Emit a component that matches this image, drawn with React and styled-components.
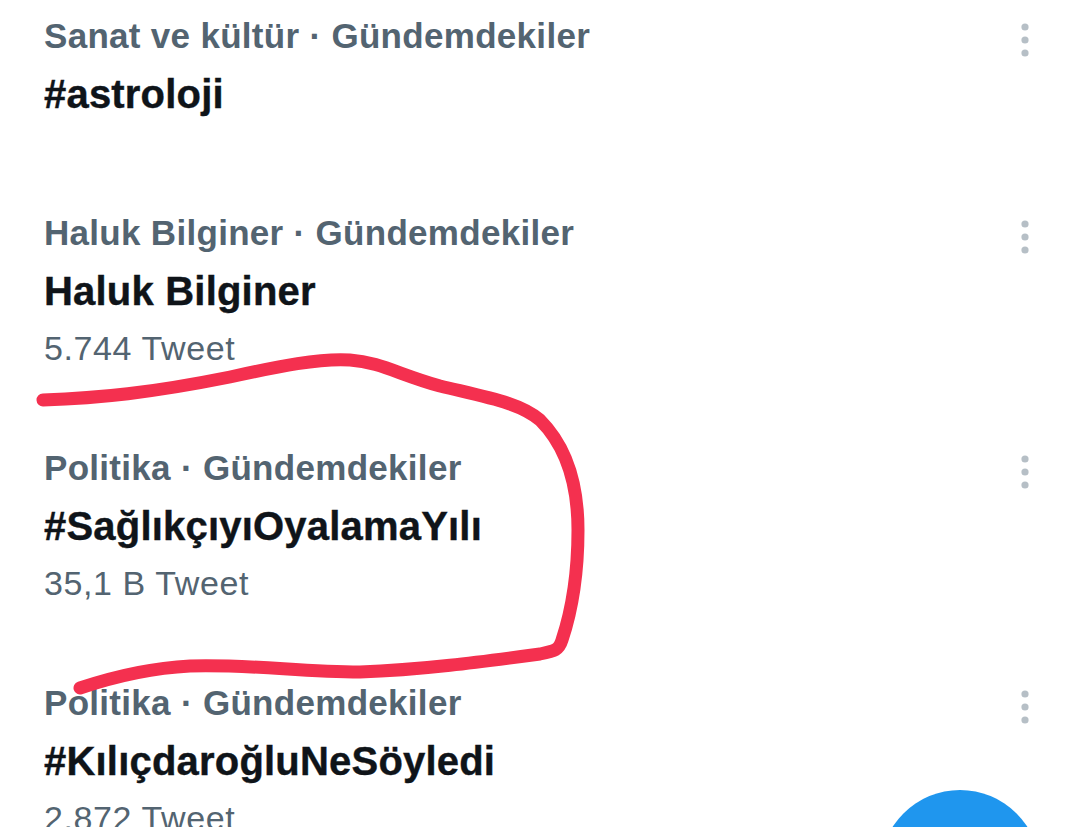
import React from 'react';
import styled, { createGlobalStyle } from 'styled-components';

const trends = [
    { category: 'Sanat ve kültür · Gündemdekiler', name: '#astroloji', top: 14, bottom: 55 },
    { category: 'Haluk Bilginer · Gündemdekiler', name: 'Haluk Bilginer', count: '5.744 Tweet' },
    { category: 'Politika · Gündemdekiler', name: '#SağlıkçıyıOyalamaYılı', count: '35,1 B Tweet' },
    { category: 'Politika · Gündemdekiler', name: '#KılıçdaroğluNeSöyledi', count: '2.872 Tweet' },
];

function MoreIcon () {
    return (
        <MoreButton aria-label="Diğer">
            <svg width="40" height="40" viewBox="0 0 40 40">
                <circle cx="20" cy="7" r="3.6" />
                <circle cx="20" cy="20" r="3.6" />
                <circle cx="20" cy="33" r="3.6" />
            </svg>
        </MoreButton>
    );
}

function App () {
    return (
        <>
            <GlobalStyle />
            <Screen>
                <List>
                    {trends.map((t, i) => (
                        <Row key={i} $top={t.top} $bottom={t.bottom}>
                            <Info>
                                <Category>{t.category}</Category>
                                <Name>{t.name}</Name>
                                {t.count && <Count>{t.count}</Count>}
                            </Info>
                            <MoreIcon />
                        </Row>
                    ))}
                </List>

                <Scribble viewBox="0 0 1080 827" width="1080" height="827">
                    <path d="M43 400 C 100 398, 150 393, 230 377 C 280 366, 320 358, 350 360 C 380 362, 400 375, 440 386 C 490 398, 520 403, 540 420 C 570 450, 578 490, 578 530 C 578 570, 572 610, 562 640 C 559 650, 555 651, 540 654 C 480 662, 420 670, 360 672 C 300 672, 250 664, 190 666 C 150 668, 110 678, 80 688" />
                </Scribble>

                <Fab aria-label="Tweetle" />
            </Screen>
        </>
    );
}

export default App;

const GlobalStyle = createGlobalStyle`
    html, body {
        margin: 0;
        padding: 0;
        background: #ffffff;
        overflow: hidden;
    }
`;

const Screen = styled.div`
    position: relative;
    width: 1080px;
    height: 827px;
    overflow: hidden;
    background: #ffffff;
    font-family: "Liberation Sans", Arial, sans-serif;
`;

const List = styled.div`
    display: flex;
    flex-direction: column;
`;

const Row = styled.div`
    display: flex;
    justify-content: space-between;
    align-items: flex-start;
    padding: ${p => p.$top ?? 36}px 35px ${p => p.$bottom ?? 37}px 44px;
`;

const Info = styled.div`
    display: flex;
    flex-direction: column;
`;

const Category = styled.div`
    font-size: 35px;
    line-height: 44px;
    font-weight: 700;
    letter-spacing: 0.3px;
    color: #536471;
`;

const Name = styled.div`
    margin-top: 10px;
    font-size: 40px;
    line-height: 52px;
    font-weight: 700;
    letter-spacing: 0.2px;
    color: #0f1419;
    -webkit-text-stroke: 0.4px #0f1419;
`;

const Count = styled.div`
    margin-top: 6px;
    font-size: 34px;
    line-height: 50px;
    font-weight: 400;
    letter-spacing: 0.6px;
    color: #536471;
`;

const MoreButton = styled.div`
    margin-top: 6px;
    width: 40px;
    height: 40px;
    svg {
        display: block;
        fill: #b6bfc6;
    }
`;

const Scribble = styled.svg`
    position: absolute;
    top: 0;
    left: 0;
    pointer-events: none;
    path {
        fill: none;
        stroke: #f4304f;
        stroke-width: 13;
        stroke-linecap: round;
        stroke-linejoin: round;
    }
`;

const Fab = styled.div`
    position: absolute;
    left: 880px;
    top: 790px;
    width: 160px;
    height: 160px;
    border-radius: 50%;
    background: #1f96ee;
`;
